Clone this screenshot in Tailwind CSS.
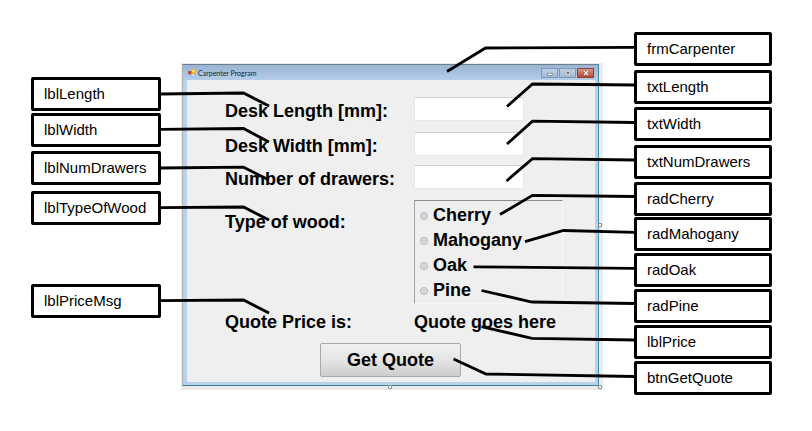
<!DOCTYPE html>
<html lang="en">
<head>
<meta charset="utf-8">
<meta name="viewport" content="width=device-width, initial-scale=1">
<title>Carpenter Program</title>
<script src="https://cdn.jsdelivr.net/npm/@tailwindcss/browser@4"></script>
</head>
<body class="bg-white text-black font-['Liberation_Sans',Arial,sans-serif]">
<main class="relative flex items-start pt-8 pb-9 pl-[31px] pr-10">

  <!-- Label names -->
  <ul class="w-[130px] shrink-0 pt-[45px] text-[15px] leading-7">
    <li class="h-[34px] rounded-xs border-3 border-black bg-white pl-[10px]">lblLength</li>
    <li class="mt-[2px] h-[34px] rounded-xs border-3 border-black bg-white pl-[10px]">lblWidth</li>
    <li class="mt-1 h-[34px] rounded-xs border-3 border-black bg-white pl-[10px]">lblNumDrawers</li>
    <li class="mt-[6px] h-[34px] rounded-xs border-3 border-black bg-white pl-[10px]">lblTypeOfWood</li>
    <li class="mt-[59px] h-[34px] rounded-xs border-3 border-black bg-white pl-[10px]">lblPriceMsg</li>
  </ul>

  <!-- Form window -->
  <section class="relative ml-5 mr-[31px] mt-[31px] min-w-0 flex-1 bg-[#ebebeb] pt-px pl-px pr-1 pb-1">
    <div class="border-t border-l border-r border-b border-t-[#6f7f8f] border-l-[#b4b4b4] border-r-[#3b93ad] border-b-[#3b8498] bg-[#bad1ec] pr-[3px] pb-[3px] pl-1">
      <header class="-mr-[3px] -ml-1 flex h-[15px] items-center bg-linear-to-b from-[#9ab4d2] to-[#b5cde9] pr-1 pl-[5px]">
        <svg class="size-2" viewBox="0 0 8 8" aria-hidden="true">
          <rect x="3.2" y="0.3" width="4.2" height="4.8" rx="0.6" fill="#f2b824"/>
          <rect x="4.4" y="1" width="1.8" height="2" fill="#ffe79a"/>
          <rect x="0.2" y="2" width="3.2" height="3.3" rx="0.5" fill="#c43d35"/>
          <rect x="3.4" y="5.3" width="3.4" height="2" rx="0.5" fill="#f7f9fc" stroke="#6c8fbd" stroke-width="0.5"/>
        </svg>
        <h1 class="ml-[2px] flex-1 font-['Lato','Open_Sans',sans-serif] text-[7px] leading-[14px] text-[#1c2430]">Carpenter Program</h1>
        <div class="flex gap-px">
          <button type="button" aria-label="Minimize" class="flex h-[10px] w-[17px] items-center justify-center border border-[#7e97b4] bg-linear-to-b from-[#c0d2e8] to-[#9fb9d7]">
            <svg class="size-2" viewBox="0 0 8 8"><rect x="1.5" y="4.2" width="5" height="2" fill="#fff" stroke="#67717e" stroke-width="0.6"/></svg>
          </button>
          <button type="button" aria-label="Maximize" class="flex h-[10px] w-[17px] items-center justify-center border border-[#7e97b4] bg-linear-to-b from-[#c0d2e8] to-[#9fb9d7]">
            <svg class="size-2" viewBox="0 0 8 8"><rect x="2" y="2" width="4" height="4" fill="#6b7685" stroke="#56606d" stroke-width="2"/><rect x="2" y="2" width="4" height="4" fill="#6b7685" stroke="#fff" stroke-width="1.2"/></svg>
          </button>
          <button type="button" aria-label="Close" class="flex h-[10px] w-[17px] items-center justify-center border border-[#85433f] bg-linear-to-b from-[#dc9385] to-[#c0432c]">
            <svg class="size-2" viewBox="0 0 8 8"><path d="M2 2 6 6M6 2 2 6" stroke="#6d4a4a" stroke-width="2.2"/><path d="M2 2 6 6M6 2 2 6" stroke="#fff" stroke-width="1.4"/></svg>
          </button>
        </div>
      </header>

      <form class="bg-[#efefef] pt-[17px] pb-[5px] pl-[38px] text-lg leading-7 font-bold">
        <div class="flex items-start">
          <label for="length" class="w-[189px]">Desk Length [mm]:</label>
          <input id="length" type="text" class="h-6 w-[110px] border border-[#e6e8ec] border-t-[#cfcfcf] bg-white px-1 text-sm">
        </div>
        <div class="mt-[7px] flex items-start">
          <label for="width" class="w-[189px]">Desk Width [mm]:</label>
          <input id="width" type="text" class="h-6 w-[110px] border border-[#e6e8ec] border-t-[#cfcfcf] bg-white px-1 text-sm">
        </div>
        <div class="mt-[5px] flex items-start">
          <label for="drawers" class="w-[189px]">Number of drawers:</label>
          <input id="drawers" type="text" class="h-6 w-[110px] border border-[#e6e8ec] border-t-[#cfcfcf] bg-white px-1 text-sm">
        </div>
        <div class="mt-[7px] flex items-start" role="radiogroup" aria-labelledby="wood-label">
          <span id="wood-label" class="w-[189px] pt-2">Type of wood:</span>
          <div class="flex h-[104px] w-[149px] flex-col border border-[#f6f6f6] border-t-[#8c8c8c] border-l-[#a0a0a0] pt-[2px] pl-[5px] leading-[25px]">
            <label class="flex items-center gap-[5px]"><input type="radio" name="wood" class="size-2 appearance-none rounded-full border border-[#b0b3b6] bg-radial from-[#c3c7ca] to-[#f4f4f4]">Cherry</label>
            <label class="flex items-center gap-[5px]"><input type="radio" name="wood" class="size-2 appearance-none rounded-full border border-[#b0b3b6] bg-radial from-[#c3c7ca] to-[#f4f4f4]">Mahogany</label>
            <label class="flex items-center gap-[5px]"><input type="radio" name="wood" class="size-2 appearance-none rounded-full border border-[#b0b3b6] bg-radial from-[#c3c7ca] to-[#f4f4f4]">Oak</label>
            <label class="flex items-center gap-[5px]"><input type="radio" name="wood" class="size-2 appearance-none rounded-full border border-[#b0b3b6] bg-radial from-[#c3c7ca] to-[#f4f4f4]">Pine</label>
          </div>
        </div>
        <div class="mt-1 flex">
          <span class="w-[189px]">Quote Price is:</span>
          <output>Quote goes here</output>
        </div>
        <button type="button" class="mt-[7px] ml-[95px] block h-[34px] w-[141px] rounded-xs border border-[#a9a9a9] bg-linear-to-b from-[#f1f1f1] from-0% via-[#e4e4e4] via-50% to-[#cdcdcd]">Get Quote</button>
      </form>
    </div>
    <!-- Resize handles -->
    <i class="absolute top-40 right-px size-1 rounded-[1px] border border-[#8a8a8a] bg-white"></i>
    <i class="absolute right-px bottom-px size-1 rounded-[1px] border border-[#8a8a8a] bg-white"></i>
    <i class="absolute bottom-px left-1/2 size-1 -translate-x-1 rounded-[1px] border border-[#8a8a8a] bg-white"></i>
  </section>

  <!-- Control names -->
  <ul class="w-[138px] shrink-0 text-[15px] leading-7">
    <li class="h-[34px] rounded-xs border-3 border-black bg-white pl-[10px]">frmCarpenter</li>
    <li class="mt-1 h-[34px] rounded-xs border-3 border-black bg-white pl-[10px]">txtLength</li>
    <li class="mt-[3px] h-[34px] rounded-xs border-3 border-black bg-white pl-[10px]">txtWidth</li>
    <li class="mt-[4px] h-[34px] rounded-xs border-3 border-black bg-white pl-[10px]">txtNumDrawers</li>
    <li class="mt-[3px] h-[34px] rounded-xs border-3 border-black bg-white pl-[10px]">radCherry</li>
    <li class="mt-px h-[34px] rounded-xs border-3 border-black bg-white pl-[10px]">radMahogany</li>
    <li class="mt-[2px] h-[34px] rounded-xs border-3 border-black bg-white pl-[10px]">radOak</li>
    <li class="mt-[2px] h-[34px] rounded-xs border-3 border-black bg-white pl-[10px]">radPine</li>
    <li class="mt-[2px] h-[34px] rounded-xs border-3 border-black bg-white pl-[10px]">lblPrice</li>
    <li class="mt-[2px] h-[34px] rounded-xs border-3 border-black bg-white pl-[10px]">btnGetQuote</li>
  </ul>

  <!-- Leader lines -->
  <svg class="pointer-events-none absolute inset-0 h-full w-full" viewBox="0 0 812 431" preserveAspectRatio="none" fill="none" stroke="#000" stroke-width="2.8" aria-hidden="true">
    <path d="M160 94 243.5 93 269 106"/>
    <path d="M160 129.300 243.500 128.500 269 142"/>
    <path d="M160 168 243.500 167.200 269 180"/>
    <path d="M160 207.700 243.500 207 269 220"/>
    <path d="M160 300.700 243.500 300 269 313"/>
    <path d="M635 47.300 485.500 48 447 71.500"/>
    <path d="M635 85 532.500 84 507 106.500"/>
    <path d="M635 122.500 532.500 121.200 507 144"/>
    <path d="M635 160 532.500 158.700 506.500 181"/>
    <path d="M635 196.500 532.500 195.300 500 214.500"/>
    <path d="M635 232.300 563.500 230.500 525 241.700"/>
    <path d="M635 268.300 473.500 266.800"/>
    <path d="M635 303.500 532 302 481.500 290.500"/>
    <path d="M635 340 532 338.300 481.500 326.700"/>
    <path d="M635 376.500 486 374 453.500 359"/>
  </svg>
</main>
</body>
</html>
